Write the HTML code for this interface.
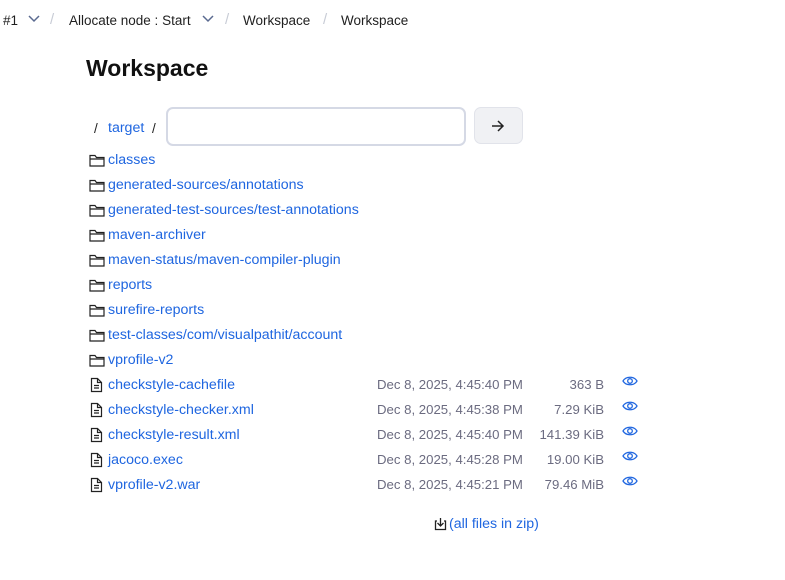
<!DOCTYPE html>
<html><head><style>
body{margin:0;width:785px;height:580px;background:#fff;font-family:"Liberation Sans",sans-serif;font-size:13.5px;color:#1f1f1f;position:relative;overflow:hidden}
.a{position:absolute;white-space:nowrap}
a{color:#1f66e0;text-decoration:none;font-size:14.2px}
.g{color:#6b6b80;font-size:13.2px}
.sl{color:#c8ccd6}
.chev{stroke:#5a6a90;fill:none;stroke-width:1.5}
</style></head><body>
<div class="a" style="left:3px;top:13px">#1</div>
<svg class="a" style="left:28px;top:14px" width="12" height="10"><path class="chev" d="M1 2l5 5 5-5"/></svg>
<div class="a sl" style="left:50px;top:11px;font-size:15px">/</div>
<div class="a" style="left:69px;top:13px">Allocate node : Start</div>
<svg class="a" style="left:202px;top:14px" width="12" height="10"><path class="chev" d="M1 2l5 5 5-5"/></svg>
<div class="a sl" style="left:225px;top:11px;font-size:15px">/</div>
<div class="a" style="left:243px;top:13px">Workspace</div>
<div class="a sl" style="left:323px;top:11px;font-size:15px">/</div>
<div class="a" style="left:341px;top:13px">Workspace</div>
<div class="a" style="left:86px;top:55px;font-size:23px;font-weight:bold;color:#111">Workspace</div>
<div class="a" style="left:94px;top:121px">/</div>
<div class="a" style="left:108px;top:120px"><a>target</a></div>
<div class="a" style="left:152px;top:121px">/</div>
<div class="a" style="left:166px;top:107px;width:296px;height:35px;border:2px solid #d5d9e5;border-radius:7px"></div>
<div class="a" style="left:474px;top:107px;width:49px;height:37px;background:#f0f1f4;border:1px solid #e1e3ea;border-radius:7px;box-sizing:border-box"></div>
<svg class="a" style="left:491px;top:120px" width="14" height="12"><path d="M1 6h11M7 1l5 5-5 5" stroke="#222" stroke-width="1.5" fill="none"/></svg>
<div id="rows"></div>
<script>
var d=["classes","generated-sources/annotations","generated-test-sources/test-annotations","maven-archiver","maven-status/maven-compiler-plugin","reports","surefire-reports","test-classes/com/visualpathit/account","vprofile-v2"];
var f=[["checkstyle-cachefile","Dec 8, 2025, 4:45:40 PM","363 B"],["checkstyle-checker.xml","Dec 8, 2025, 4:45:38 PM","7.29 KiB"],["checkstyle-result.xml","Dec 8, 2025, 4:45:40 PM","141.39 KiB"],["jacoco.exec","Dec 8, 2025, 4:45:28 PM","19.00 KiB"],["vprofile-v2.war","Dec 8, 2025, 4:45:21 PM","79.46 MiB"]];
var h="";
d.forEach(function(n,i){var y=151+25*i;
h+='<svg class="a" style="left:89px;top:'+(y+2)+'px" width="16" height="14"><path d="M1 2.5h5l1.5 2H15v8.5H1z M1 6h14" stroke="#222" stroke-width="1.2" fill="none"/></svg>';
h+='<div class="a" style="left:108px;top:'+(y+1)+'px"><a>'+n+'</a></div>';});
f.forEach(function(r,i){var y=376+25*i;
h+='<svg class="a" style="left:90px;top:'+(y+1)+'px" width="13" height="16"><path d="M1.5 1.5h6l4 4v9h-10z M7.5 1.5v4h4 M4 8.5h5M4 11h5" stroke="#222" stroke-width="1.2" fill="none"/></svg>';
h+='<div class="a" style="left:108px;top:'+(y+1)+'px"><a>'+r[0]+'</a></div>';
h+='<div class="a g" style="left:377px;top:'+(y+1)+'px">'+r[1]+'</div>';
h+='<div class="a g" style="right:181px;top:'+(y+1)+'px">'+r[2]+'</div>';
h+='<svg class="a" style="left:622px;top:'+(y-1)+'px" width="16" height="12"><path d="M1 6C4 1 12 1 15 6 12 11 4 11 1 6z" stroke="#1f66e0" stroke-width="1.3" fill="none"/><circle cx="8" cy="6" r="2.3" stroke="#1f66e0" stroke-width="1.3" fill="none"/></svg>';});
document.getElementById("rows").innerHTML=h;
</script>
<svg class="a" style="left:434px;top:517px" width="13" height="14"><path d="M3 4H1.5v8.5h10V4H10 M6.5 1v8 M3.5 6l3 3 3-3" stroke="#222" stroke-width="1.3" fill="none"/></svg>
<div class="a" style="left:449px;top:516px"><a>(all files in zip)</a></div>
</body></html>
